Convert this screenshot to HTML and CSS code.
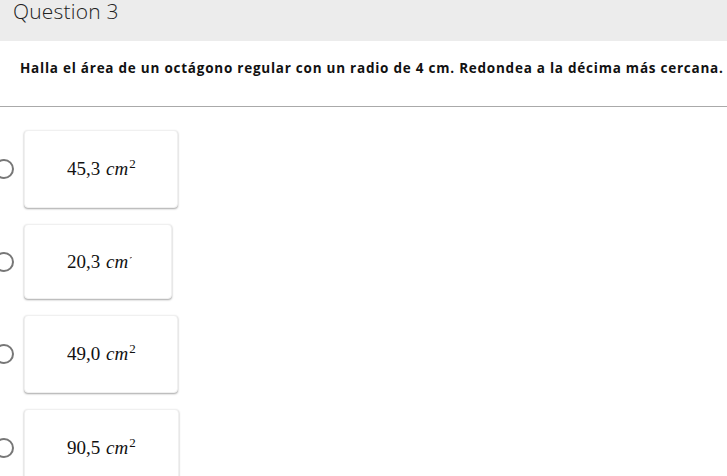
FILE: index.html
```html
<!DOCTYPE html>
<html lang="es">
<head>
    <meta charset="UTF-8">
    <meta name="viewport" content="width=device-width, initial-scale=1.0">
    <title>Question 3</title>
    <link rel="stylesheet" href="styles.css">
</head>
<body>
    <div class="question-header"><span class="title">Question 3</span></div>
    <div class="question-text">Halla el área de un octágono regular con un radio de 4 cm. Redondea a la décima más cercana.</div>

    <div class="options">
        <div class="option">
            <span class="radio"></span>
            <div class="card card-a"><span class="math">45,3 <i>cm</i><sup>2</sup></span></div>
        </div>
        <div class="option">
            <span class="radio"></span>
            <div class="card card-b"><span class="math">20,3 <i>cm</i><sup class="clip">2</sup></span></div>
        </div>
        <div class="option">
            <span class="radio"></span>
            <div class="card card-a"><span class="math">49,0 <i>cm</i><sup>2</sup></span></div>
        </div>
        <div class="option">
            <span class="radio"></span>
            <div class="card card-c"><span class="math">90,5 <i>cm</i><sup>2</sup></span></div>
        </div>
    </div>
</body>
</html>
```

FILE: styles.css
```css
* {
    margin: 0;
    padding: 0;
    box-sizing: border-box;
}

body {
    background: #fff;
    color: #111;
    font-family: 'Open Sans', sans-serif;
    overflow: hidden;
}

.question-header {
    height: 41px;
    background: #ececec;
    padding: 1px 0 0 13px;
    font-size: 21px;
    font-weight: 300;
    line-height: 20px;
    letter-spacing: 0.2px;
    color: #222;
}

.question-text {
    height: 66px;
    padding: 16px 0 0 20px;
    border-bottom: 1px solid #aaa;
    font-size: 13.5px;
    font-weight: 700;
    line-height: 22px;
    white-space: nowrap;
    letter-spacing: 0.76px;
}

.options {
    display: flex;
    flex-direction: column;
    gap: 16px;
    padding-top: 23px;
    margin-left: -6px;
}

.option {
    display: flex;
    align-items: center;
    gap: 10px;
}

.radio {
    width: 20px;
    height: 20px;
    border: 2px solid #777;
    border-radius: 50%;
    flex-shrink: 0;
}

.card {
    height: 78px;
    width: 154px;
    display: flex;
    align-items: center;
    padding-left: 42px;
    background: #fff;
    border: 1px solid #f0f0f0;
    border-radius: 4px;
    box-shadow: 0 1px 2px rgba(0, 0, 0, 0.35);
}

.card-b {
    width: 148px;
    height: 75px;
}

.card-c {
    width: 155px;
}

.math {
    font-family: 'Liberation Serif', serif;
    font-size: 19px;
    white-space: nowrap;
}

.math i {
    margin-left: 1px;
}

.math sup {
    font-size: 13px;
    vertical-align: 7px;
    line-height: 0;
    margin-left: 1px;
}

.math .clip {
    display: inline-block;
    width: 3px;
    height: 6px;
    overflow: hidden;
    line-height: 13px;
    vertical-align: 8px;
}
```
